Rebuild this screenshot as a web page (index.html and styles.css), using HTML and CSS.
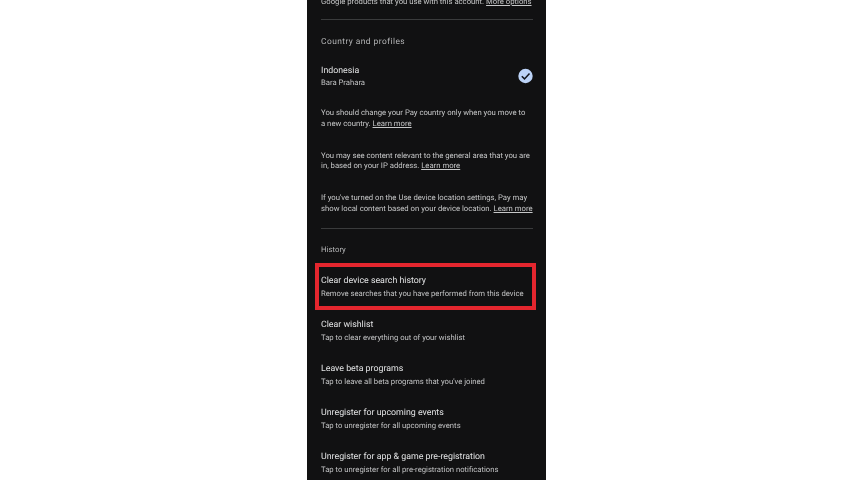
FILE: index.html
```html
<!DOCTYPE html>
<html lang="en">
<head>
<meta charset="utf-8">
<title>Settings</title>
<link rel="stylesheet" href="styles.css">
</head>
<body>
<main class="phone">
  <p class="para intro">Google products that you use with this account. <a class="link">More options</a></p>
  <hr class="rule rule-top">
  <h2 class="heading heading-country">Country and profiles</h2>
  <div class="country">
    <div>
      <div class="title">Indonesia</div>
      <div class="sub sub-tight">Bara Prahara</div>
    </div>
    <svg class="check" viewBox="0 0 16 16" aria-hidden="true">
      <circle cx="8.5" cy="8" r="7.2" fill="#bcd3f7"/>
      <path d="M4.8 8.2 7.5 10.9l5-5.4" fill="none" stroke="#10131a" stroke-width="1.5"/>
    </svg>
  </div>
  <p class="para para-a">You should change your Pay country only when you move to<br>a new country. <a class="link">Learn more</a></p>
  <p class="para para-b">You may see content relevant to the general area that you are<br>in, based on your IP address. <a class="link">Learn more</a></p>
  <p class="para para-b">If you've turned on the Use device location settings, Pay may<br>show local content based on your device location. <a class="link">Learn more</a></p>
  <hr class="rule rule-bottom">
  <h2 class="heading heading-history">History</h2>
  <div class="item item-marked">
    <div class="title">Clear device search history</div>
    <div class="sub">Remove searches that you have performed from this device</div>
    <div class="marker"></div>
  </div>
  <div class="item">
    <div class="title">Clear wishlist</div>
    <div class="sub">Tap to clear everything out of your wishlist</div>
  </div>
  <div class="item">
    <div class="title">Leave beta programs</div>
    <div class="sub">Tap to leave all beta programs that you've joined</div>
  </div>
  <div class="item">
    <div class="title">Unregister for upcoming events</div>
    <div class="sub">Tap to unregister for all upcoming events</div>
  </div>
  <div class="item">
    <div class="title">Unregister for app &amp; game pre-registration</div>
    <div class="sub">Tap to unregister for all pre-registration notifications</div>
  </div>
</main>
</body>
</html>
```
FILE: styles.css
```css
* { box-sizing: border-box; }
html, body { margin: 0; height: 480px; overflow: hidden; background: #ffffff; }
body { display: flex; justify-content: center; font-family: Roboto, "Liberation Sans", sans-serif; text-rendering: geometricPrecision; }
.phone {
  width: 239px;
  height: 480px;
  margin-right: -1px;
  padding: 0 13px 0 14px;
  background: #111112;
  color: #c9cacb;
  overflow: hidden;
  filter: blur(0.3px);
}
.para { margin: 0; font-size: 7.72px; line-height: 10.5px; color: #c6c7c8; white-space: nowrap; }
.intro { margin-top: -3px; }
.link { text-decoration: underline; }
.rule { border: 0; height: 1px; background: #3a3b3c; margin: 0; }
.rule-top { margin-top: 11px; }
.rule-bottom { margin-top: 14px; }
.heading { margin: 0; font-weight: 400; color: #b4b5b6; line-height: 11px; }
.heading-country { margin-top: 17px; font-size: 8.4px; letter-spacing: 0.45px; }
.heading-history { margin-top: 15px; font-size: 7.8px; }
.country { display: flex; justify-content: space-between; align-items: center; margin-top: 17px; }
.title { font-size: 8.8px; line-height: 12px; color: #e2e3e4; }
.sub { font-size: 7.7px; line-height: 10px; margin-top: 2px; color: #c2c3c4; }
.sub-tight { margin-top: 1px; }
.check { width: 16px; height: 16px; display: block; margin-top: -1px; }
.para-a { margin-top: 20.5px; }
.para-b { margin-top: 21.5px; }
.item { position: relative; margin-top: 20px; }
.marker {
  position: absolute;
  left: -6px;
  right: -3px;
  top: -12px;
  height: 47px;
  border: 4px solid #e4262e;
}
```
